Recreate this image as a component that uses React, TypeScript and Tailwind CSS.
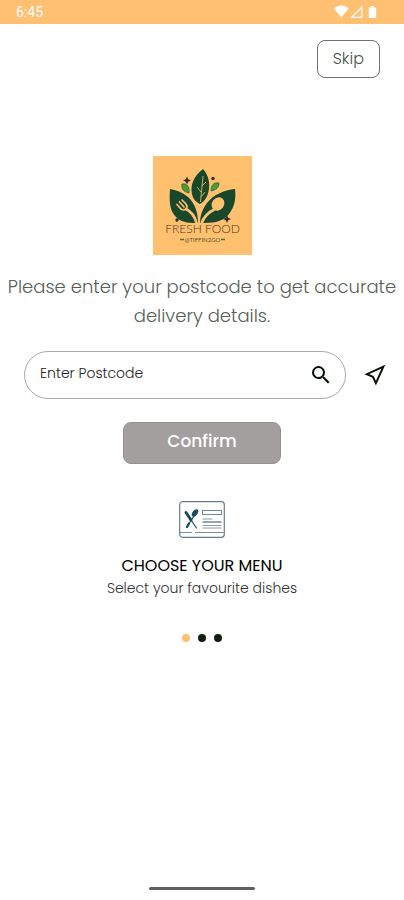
import { useState } from 'react';

const SLIDES = [
  { title: 'CHOOSE YOUR MENU', text: 'Select your favourite dishes' },
  { title: 'PLACE YOUR ORDER', text: 'Order in just a few taps' },
  { title: 'FAST DELIVERY', text: 'Hot food at your door' },
];

function StatusBar() {
  return (
    <div className="flex h-6 items-center justify-between bg-[#ffc071] pl-4 pr-[26px] text-white">
      <span className="font-[Roboto,sans-serif] text-sm leading-6">6:45</span>
      <svg className="h-4 w-11" viewBox="0 0 44 16" fill="currentColor" aria-hidden="true">
        <path d="M0 4.6C4 .6 10.600 .6 14.6 4.6L7.3 13.6Z" />
        <path d="M27.8 3.2V13.3H17.6Z" fill="none" stroke="currentColor" strokeWidth="1.3" />
        <path d="M37 2h3v1.4h1.2c.6 0 1 .4 1 1V13c0 .6-.4 1-1 1h-5.4c-.6 0-1-.4-1-1V4.4c0-.6.4-1 1-1H37Z" />
      </svg>
    </div>
  );
}

function Logo() {
  return (
    <svg
      className="size-[99px] bg-[#ffc070]"
      viewBox="0 0 99 99"
      role="img"
      aria-label="Fresh Food"
    >
      {/* leaves */}
      <g fill="#18472a">
        <path d="M50 13C41 20 37 29 39 38 40 43 43 46 47 48 54 44 57 35 56 26 55 20 53 16 50 13Z" />
        <path d="M17 33C16 47 17 56 24 62 30 67 37 67 45 67 45 57 42 47 35 41 29 36 23 34 17 33Z" />
        <path d="M82 33C71 34 60 39 54 47 49 54 47 60 47 67 58 67 69 67 76 58 82 50 83 42 82 33Z" />
      </g>
      <path d="M50 20 47.5 46M48 36 44 31M49 30 53 26M48 41 52 36" fill="none" stroke="#ffc070" strokeWidth=".8" />
      {/* fork */}
      <g fill="none" stroke="#ffc070" strokeLinecap="round">
        <path d="M33 53Q41 57 43.500 67" strokeWidth="2.600" />
        <path d="M24 48.500 28 53Q31 55 33 53T33 48L29 44M26.500 46 31 51" strokeWidth="1.700" />
      </g>
      {/* spoon */}
      <ellipse cx="65" cy="48" rx="6" ry="7" fill="#ffc070" transform="rotate(38 65 48)" />
      <path d="M62 53Q52 58 48.500 67" fill="none" stroke="#ffc070" strokeWidth="2.800" />
      {/* small leaves */}
      <g fill="#4e9a36" stroke="#245e26" strokeWidth=".7">
        <path d="M29 28C33 27 37 30 36 37 31 36 28 33 29 28Z" />
        <path d="M66 27C61 26 58 29 58 35 63 34 66 32 66 27Z" />
      </g>
      {/* sparkles */}
      <g fill="#3a281b">
        <path d="M34 20.500 35.200 23.300 38 24.500 35.200 25.700 34 28.500 32.800 25.700 30 24.500 32.800 23.300Z" />
        <path d="M74 59 75.200 61.800 78 63 75.200 64.200 74 67 72.800 64.200 70 63 72.800 61.800Z" />
        <circle cx="60" cy="22.500" r="1.700" />
        <circle cx="24" cy="64" r="1.700" />
      </g>
      <text x="49.500" y="77" textAnchor="middle" fontFamily="Lato, sans-serif" fontSize="12" fontWeight="300" fill="#4d3420">
        FRESH FOOD
      </text>
      <text x="49.500" y="86" textAnchor="middle" fontFamily="Lato, sans-serif" fontSize="6" fill="#5e5428">
        @TIFFIN2GO
      </text>
      <path d="M27 83.500h4M68 83.500h4" stroke="#437c2e" strokeWidth="1.300" />
    </svg>
  );
}

function SearchIcon() {
  return (
    <svg className="size-6" viewBox="0 0 24 24" fill="#071006" aria-hidden="true">
      <path d="M15.500 14h-.79l-.28-.27A6.470 6.470 0 0 0 16 9.500 6.500 6.500 0 1 0 9.500 16c1.610 0 3.090-.59 4.230-1.570l.27.28v.79l5 4.990L20.490 19l-4.990-5zm-6 0C7.010 14 5 11.990 5 9.500S7.010 5 9.500 5 14 7.010 14 9.500 11.990 14 9.500 14z" />
    </svg>
  );
}

function LocationIcon() {
  return (
    <svg className="size-6" viewBox="0 0 24 24" fill="none" stroke="#071006" strokeWidth="1.900" aria-hidden="true">
      <path d="M20.400 3.600 3.800 11.200 9.900 13.800 12.900 20.200Z" />
    </svg>
  );
}

function MenuCardIcon() {
  return (
    <svg className="h-[37px] w-[46px]" viewBox="0 0 46 37" fill="none" aria-hidden="true">
      <rect x=".7" y=".7" width="44.600" height="35.600" rx="3" stroke="#687e86" strokeWidth="1.200" />
      <path d="M1 31.500h12M16 31.500h29" stroke="#7d9096" />
      <rect x="23.500" y="9.500" width="19" height="4" stroke="#71868e" />
      <path d="M23.500 18h10M23.500 24.500h19M23.500 27h19" stroke="#8d9ca1" />
      <path d="M23.500 21h19" stroke="#7d8f95" strokeWidth="1.600" />
      <g stroke="#1d4c5e" strokeLinecap="round">
        <path d="M7 11.500 12 19" strokeWidth="3" />
        <path d="M11 17.500 17.500 27" strokeWidth="1.200" />
        <path d="M15 15 9 24" strokeWidth="1.200" />
        <path d="M10 22.500 8 26" strokeWidth="2.400" />
      </g>
      <ellipse cx="16" cy="12" rx="2.500" ry="4.200" fill="#1d4c5e" transform="rotate(35 16 12)" />
    </svg>
  );
}

export default function App() {
  const [postcode, setPostcode] = useState('');
  const [slide, setSlide] = useState(0);

  return (
    <div className="flex min-h-screen flex-col bg-white font-[Poppins,Inter,sans-serif] text-[#1c2a1c]">
      <StatusBar />

      <header className="flex justify-end px-6 pt-4">
        <button className="h-[38px] rounded-lg border border-[#707070] px-[15px] text-base font-light text-[#4a544a]">
          Skip
        </button>
      </header>

      <main className="flex flex-1 flex-col items-center pt-[78px]">
        <Logo />

        <p className="mt-[17px] px-1 text-center text-lg leading-[29px] font-light text-[#566056]">
          Please enter your postcode to get accurate delivery details.
        </p>

        <form className="mt-[21px] w-full" onSubmit={(e) => e.preventDefault()}>
          <div className="flex items-center gap-[17px] pr-[17px] pl-6">
            <div className="flex h-12 min-w-0 flex-1 items-center rounded-full border border-[#a8a8a8] pr-3 pl-[15px]">
              <input
                type="text"
                aria-label="Postcode"
                placeholder="Enter Postcode"
                value={postcode}
                onChange={(e) => setPostcode(e.target.value)}
                className="h-10 min-w-0 flex-1 pb-1 text-sm font-light outline-none placeholder:text-[#1c241c]"
              />
              <button type="submit" aria-label="Search">
                <SearchIcon />
              </button>
            </div>
            <button type="button" aria-label="Use my location">
              <LocationIcon />
            </button>
          </div>

          <button
            type="submit"
            className="mx-auto mt-[23px] block h-[42px] w-[158px] rounded-lg border border-[#959191] bg-[#a39f9f] pb-0.5 text-[17px] font-medium text-white"
          >
            Confirm
          </button>
        </form>

        <section className="mt-[37px] flex flex-col items-center text-center">
          <MenuCardIcon />
          <h2 className="mt-4 text-base leading-6 text-black">{SLIDES[slide].title}</h2>
          <p className="text-sm leading-5 font-light text-[#303030]">{SLIDES[slide].text}</p>
        </section>

        <div className="mt-9 flex gap-2">
          {SLIDES.map((item, i) => (
            <button
              key={item.title}
              aria-label={item.title}
              onClick={() => setSlide(i)}
              className={`size-2 rounded-full ${i === slide ? 'bg-[#ffc071]' : 'bg-[#10200f]'}`}
            />
          ))}
        </div>
      </main>

      <div className="mx-auto mb-[10px] h-[3px] w-[106px] rounded-full bg-[#606060]" />
    </div>
  );
}
